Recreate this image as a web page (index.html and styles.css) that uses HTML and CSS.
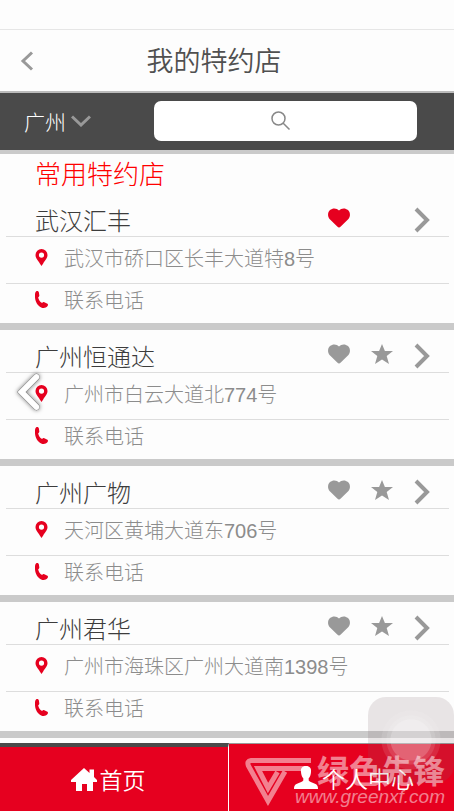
FILE: index.html
```html
<!DOCTYPE html>
<html lang="zh-CN">
<head>
<meta charset="utf-8">
<meta name="viewport" content="width=device-width, initial-scale=1">
<title>我的特约店</title>
<link rel="stylesheet" href="styles.css">
</head>
<body>
<svg class="defs" aria-hidden="true">
  <symbol id="heart" viewBox="0 0 22 20"><path d="M11 19.500Q10.200 19.500 9 18.300L1.800 11.200C-.8 8.300-.3 4.300 2 2.100 4.700-.4 8.800-.1 11 2.600 13.200-.1 17.300-.4 20 2.100c2.300 2.200 2.800 6.200.2 9.100L13 18.300Q11.800 19.500 11 19.500z"/></symbol>
  <symbol id="star" viewBox="0 0 22 20"><path d="M11 0l2.900 7H22l-6.300 5 2.300 8-7-4.600L4 20l2.300-8L0 7h8.100z"/></symbol>
  <symbol id="next" viewBox="0 0 16 26"><path d="M2 2l11 11L2 24" fill="none" stroke="currentColor" stroke-width="4"/></symbol>
  <symbol id="pin" viewBox="0 0 12 17"><path fill-rule="evenodd" d="M6 0a6 6 0 0 1 6 6c0 3.500-2.500 5-4.300 8.500L6 17l-1.700-2.500C2.500 11 0 9.500 0 6a6 6 0 0 1 6-6zm0 3.500a2.600 2.600 0 1 0 0 5.200 2.600 2.600 0 0 0 0-5.200z"/></symbol>
  <symbol id="phone" viewBox="0 0 13 17"><path d="M1 .5C2.300-.4 3.600.2 3.900 1.500l.4 2.700c.1 1-.4 1.600-1.100 1.900.1 2.400 1.700 4.900 3.900 6 .6-.9 1.300-1.300 2.200-.9l2.700 1.200c1.200.5 1.300 1.900.4 2.900-1.500 1.700-3.900 2.200-6.200 1.100C2.300 14.500-.3 9.800 0 4.500 0 2.800.1 1.300 1 .5z"/></symbol>
</svg>
<div class="app">
  <div class="status"></div>
  <header class="header">
    <button class="back" aria-label="返回"><svg viewBox="0 0 14 20"><path d="M12 1.500L3 10l9 8.500" fill="none" stroke="currentColor" stroke-width="3"/></svg></button>
    <h1>我的特约店</h1>
  </header>
  <form class="filter">
    <button type="button" class="city">广州<svg viewBox="0 0 20 12"><path d="M1 1.500l9 8.500 9-8.500" fill="none" stroke="currentColor" stroke-width="3"/></svg></button>
    <div class="search">
      <input type="search" aria-label="搜索">
      <svg viewBox="0 0 20 20"><path d="M14 7.500a6.500 6.500 0 1 1-13 0 6.500 6.500 0 0 1 13 0zM12.500 12.500L18.500 18.500" fill="none" stroke="currentColor" stroke-width="1.500"/></svg>
    </div>
  </form>
  <main>
    <h2>常用特约店</h2>
    <article class="shop">
      <div class="name"><h3>武汉汇丰</h3>
        <button class="mark liked" aria-label="收藏"><svg><use href="#heart"/></svg></button>
        <a class="go" href="#" aria-label="详情"><svg><use href="#next"/></svg></a></div>
      <p class="address"><svg><use href="#pin"/></svg>武汉市硚口区长丰大道特8号</p>
      <a class="call" href="#"><svg><use href="#phone"/></svg>联系电话</a>
    </article>
    <article class="shop">
      <div class="name"><h3>广州恒通达</h3>
        <button class="mark" aria-label="收藏"><svg><use href="#heart"/></svg></button>
        <button class="mark" aria-label="常用"><svg><use href="#star"/></svg></button>
        <a class="go" href="#" aria-label="详情"><svg><use href="#next"/></svg></a></div>
      <p class="address"><svg><use href="#pin"/></svg>广州市白云大道北774号</p>
      <a class="call" href="#"><svg><use href="#phone"/></svg>联系电话</a>
      <button class="slide" aria-label="上一页"><svg viewBox="0 0 30 44"><path d="M23 6L7 22l16 16" fill="none" stroke="#888" stroke-width="7" stroke-linecap="round"/><path d="M23 6L7 22l16 16" fill="none" stroke="#fff" stroke-width="6" stroke-linecap="round"/></svg></button>
    </article>
    <article class="shop">
      <div class="name"><h3>广州广物</h3>
        <button class="mark" aria-label="收藏"><svg><use href="#heart"/></svg></button>
        <button class="mark" aria-label="常用"><svg><use href="#star"/></svg></button>
        <a class="go" href="#" aria-label="详情"><svg><use href="#next"/></svg></a></div>
      <p class="address"><svg><use href="#pin"/></svg>天河区黄埔大道东706号</p>
      <a class="call" href="#"><svg><use href="#phone"/></svg>联系电话</a>
    </article>
    <article class="shop">
      <div class="name"><h3>广州君华</h3>
        <button class="mark" aria-label="收藏"><svg><use href="#heart"/></svg></button>
        <button class="mark" aria-label="常用"><svg><use href="#star"/></svg></button>
        <a class="go" href="#" aria-label="详情"><svg><use href="#next"/></svg></a></div>
      <p class="address"><svg><use href="#pin"/></svg>广州市海珠区广州大道南1398号</p>
      <a class="call" href="#"><svg><use href="#phone"/></svg>联系电话</a>
    </article>
  </main>
  <nav class="tabs">
    <a class="home" href="#"><svg viewBox="0 0 26 23"><path d="M13 0l5.500 5V1.500H23V9l3 3v2h-4v9h-6v-7h-5v7H5v-9H0v-2z"/></svg>首页</a>
    <a class="mine" href="#"><svg viewBox="0 0 24 23"><path d="M12 0c4 0 5.500 2.500 5 6-.2 3-1 5-2.300 6.200v2.300c1 1.500 4 2 6.300 3.200 2.300 1.100 3 2.300 3 5.300H0c0-3 .7-4.200 3-5.300 2.300-1.200 5.300-1.700 6.300-3.200v-2.300C8 11 7.200 9 7 6c-.5-3.500 1-6 5-6z"/></svg>个人中心</a>
  </nav>
  <div class="touch"></div>
  <div class="watermark">
    <svg viewBox="0 0 68 50"><path d="M66 2.500H6Q1.500 3 3.500 8L23 43 40 13.500M61 10.500H13L23 30l9.500-16" fill="none" stroke="currentColor" stroke-width="5"/></svg>
    <div><strong>绿色先锋</strong><em>www.greenxf.com</em></div>
  </div>
</div>
</body>
</html>
```

FILE: styles.css
```css
* { box-sizing: border-box; }
body, h1, h2, h3, p { margin: 0; font-weight: 300; }
body {
  background: #fdfdfd;
  color: #3c3c3c;
  font-family: "Liberation Sans", "Noto Sans CJK SC", sans-serif;
}
button, input { padding: 0; border: 0; background: none; font: inherit; color: inherit; }
a { color: inherit; text-decoration: none; }
svg { display: block; fill: currentColor; flex: none; }
.defs { position: absolute; width: 0; height: 0; }

.app { position: relative; min-height: 100vh; display: flex; flex-direction: column; overflow: hidden; }
.status { height: 30px; border-bottom: 1px solid #e6e6e6; }

.header {
  display: grid;
  grid-template-columns: 54px 1fr 80px;
  align-items: center;
  height: 63px;
  border-bottom: 2px solid #bbb;
}
.back { height: 60px; padding-left: 20px; color: #999; }
.back svg { width: 14px; height: 20px; }
.header h1 { padding-top: 2px; text-align: center; font-size: 27px; font-weight: 350; line-height: 40px; color: #505050; }

.filter {
  display: flex;
  align-items: center;
  justify-content: space-between;
  height: 61px;
  padding: 0 37px 2px 24px;
  background: #4a4a4a;
  border-bottom: 4px solid #cacaca;
}
.city { display: flex; align-items: center; gap: 5px; font-size: 21px; color: #fff; }
.city svg { width: 20px; height: 12px; color: #999; }
.search { position: relative; flex: 0 0 67%; height: 40px; color: #888; }
.search input { width: 100%; height: 40px; border-radius: 7px; background: #fff; padding: 0 12px; appearance: none; }
.search svg { position: absolute; top: 10px; left: calc(50% - 14px); width: 20px; height: 20px; }

h2 { padding: 3px 0 0 35px; font-size: 26px; line-height: 37px; color: #f00; }

.shop { position: relative; padding: 0 5px 0 6px; border-bottom: 7px solid #cacaca; }
.name {
  display: grid;
  grid-template-columns: 1fr 22px 22px 16px;
  column-gap: 21px;
  align-items: center;
  height: 43px;
  padding: 0 19px 0 29px;
  border-bottom: 1px solid #ddd;
}
.name h3 { padding-top: 14px; font-size: 24px; line-height: 28px; white-space: nowrap; }
.mark, .go { color: #999; }
.mark { padding-top: 6px; }
.mark svg { width: 22px; height: 20px; }
.liked { color: #e6001f; }
.go { grid-column: 4; padding-top: 10px; }
.go svg { width: 16px; height: 26px; }

.address, .call { display: flex; align-items: center; gap: 16px; padding-left: 29px; font-size: 20px; color: #8c8c8c; }
.address { height: 47px; padding-bottom: 5px; border-bottom: 1px solid #ddd; }
.call { height: 39px; padding-bottom: 8px; }
.address svg, .call svg { width: 13px; height: 17px; color: #e6001f; }

.slide { position: absolute; top: 41px; left: 15px; filter: drop-shadow(0 0 2px #777); }
.slide svg { width: 28px; height: 42px; }

.tabs { display: grid; grid-template-columns: 102fr 100fr; flex: 1; min-height: 68px; margin-top: 5px; color: #fff; font-size: 23px; font-weight: 350; }
.tabs a { display: flex; align-items: center; justify-content: center; gap: 3px; background: #e6001f; }
.home { padding-right: 12px; border-top: 4px solid #4a4a4a; border-right: 1px solid #fff; }
.mine { padding-left: 24px; border-top: 1px solid #999; }
.tabs svg { width: 26px; height: 23px; }

.touch {
  position: absolute;
  right: 0;
  bottom: 28px;
  width: 86px;
  height: 86px;
  border-radius: 18px;
  background: radial-gradient(circle, rgba(255,255,255,.35) 20px, rgba(255,255,255,.2) 21px 24px, rgba(255,255,255,.1) 25px 29px, transparent 30px), rgba(125,100,105,.16);
}
.watermark {
  position: absolute;
  right: 9px;
  bottom: 3px;
  display: flex;
  color: rgba(255,255,255,.5);
  pointer-events: none;
}
.watermark > svg { width: 68px; height: 50px; margin-right: -18px; }
.watermark div { display: flex; flex-direction: column; align-items: flex-end; }
.watermark strong { font-size: 32px; font-weight: 700; line-height: 28px; }
.watermark em { font-size: 19px; line-height: 22px; }
```
